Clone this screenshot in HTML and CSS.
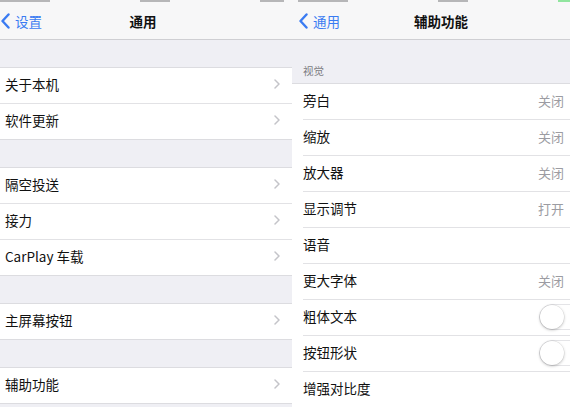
FILE: index.html
```html
<!DOCTYPE html>
<html lang="zh-CN">

<head>
    <meta charset="UTF-8">
    <meta name="viewport" content="width=device-width, initial-scale=1.0">
    <title>通用 / 辅助功能</title>

    <link rel="stylesheet" href="styles.css">
</head>

<body>

    <div class="screens">

        <!-- 通用 -->
        <section class="screen screen-left">
            <div class="status">
                <span class="status-mark mark-carrier"></span>
                <span class="status-mark mark-time"></span>
                <span class="status-mark mark-battery"></span>
            </div>
            <header class="nav">
                <a class="back">
                    <svg class="back-icon" viewBox="0 0 9 16" width="9" height="16">
                        <polyline points="7.5,1.5 1.5,8 7.5,14.5" />
                    </svg>
                    设置
                </a>
                <h1 class="nav-title">通用</h1>
            </header>

            <div class="group">
                <div class="row">
                    <div class="row-body"><span class="label">关于本机</span><svg class="chevron" viewBox="0 0 6 10" width="6" height="10"><polyline points="1,1 5,5 1,9" /></svg></div>
                </div>
                <div class="row">
                    <div class="row-body"><span class="label">软件更新</span><svg class="chevron" viewBox="0 0 6 10" width="6" height="10"><polyline points="1,1 5,5 1,9" /></svg></div>
                </div>
            </div>

            <div class="group">
                <div class="row">
                    <div class="row-body"><span class="label">隔空投送</span><svg class="chevron" viewBox="0 0 6 10" width="6" height="10"><polyline points="1,1 5,5 1,9" /></svg></div>
                </div>
                <div class="row">
                    <div class="row-body"><span class="label">接力</span><svg class="chevron" viewBox="0 0 6 10" width="6" height="10"><polyline points="1,1 5,5 1,9" /></svg></div>
                </div>
                <div class="row">
                    <div class="row-body"><span class="label">CarPlay 车载</span><svg class="chevron" viewBox="0 0 6 10" width="6" height="10"><polyline points="1,1 5,5 1,9" /></svg></div>
                </div>
            </div>

            <div class="group">
                <div class="row">
                    <div class="row-body"><span class="label">主屏幕按钮</span><svg class="chevron" viewBox="0 0 6 10" width="6" height="10"><polyline points="1,1 5,5 1,9" /></svg></div>
                </div>
            </div>

            <div class="group">
                <div class="row">
                    <div class="row-body"><span class="label">辅助功能</span><svg class="chevron" viewBox="0 0 6 10" width="6" height="10"><polyline points="1,1 5,5 1,9" /></svg></div>
                </div>
            </div>
        </section>

        <!-- 辅助功能 -->
        <section class="screen screen-right">
            <div class="status">
                <span class="status-mark mark-carrier"></span>
                <span class="status-mark mark-time"></span>
                <span class="status-mark mark-battery battery-green"></span>
            </div>
            <header class="nav">
                <a class="back">
                    <svg class="back-icon" viewBox="0 0 9 16" width="9" height="16">
                        <polyline points="7.5,1.5 1.5,8 7.5,14.5" />
                    </svg>
                    通用
                </a>
                <h1 class="nav-title">辅助功能</h1>
            </header>

            <div class="section-header">视觉</div>

            <div class="group group-flush">
                <div class="row">
                    <div class="row-body"><span class="label">旁白</span><span class="value">关闭</span><svg class="chevron" viewBox="0 0 6 10" width="6" height="10"><polyline points="1,1 5,5 1,9" /></svg></div>
                </div>
                <div class="row">
                    <div class="row-body"><span class="label">缩放</span><span class="value">关闭</span><svg class="chevron" viewBox="0 0 6 10" width="6" height="10"><polyline points="1,1 5,5 1,9" /></svg></div>
                </div>
                <div class="row">
                    <div class="row-body"><span class="label">放大器</span><span class="value">关闭</span><svg class="chevron" viewBox="0 0 6 10" width="6" height="10"><polyline points="1,1 5,5 1,9" /></svg></div>
                </div>
                <div class="row">
                    <div class="row-body"><span class="label">显示调节</span><span class="value">打开</span><svg class="chevron" viewBox="0 0 6 10" width="6" height="10"><polyline points="1,1 5,5 1,9" /></svg></div>
                </div>
                <div class="row">
                    <div class="row-body"><span class="label">语音</span><svg class="chevron" viewBox="0 0 6 10" width="6" height="10"><polyline points="1,1 5,5 1,9" /></svg></div>
                </div>
                <div class="row">
                    <div class="row-body"><span class="label">更大字体</span><span class="value">关闭</span><svg class="chevron" viewBox="0 0 6 10" width="6" height="10"><polyline points="1,1 5,5 1,9" /></svg></div>
                </div>
                <div class="row">
                    <div class="row-body"><span class="label">粗体文本</span><span class="toggle"><span class="knob"></span></span></div>
                </div>
                <div class="row">
                    <div class="row-body"><span class="label">按钮形状</span><span class="toggle"><span class="knob"></span></span></div>
                </div>
                <div class="row">
                    <div class="row-body"><span class="label">增强对比度</span><svg class="chevron" viewBox="0 0 6 10" width="6" height="10"><polyline points="1,1 5,5 1,9" /></svg></div>
                </div>
            </div>
        </section>

    </div>

</body>

</html>
```

FILE: styles.css
```css
body {
    margin: 0;
    width: 570px;
    height: 407px;
    overflow: hidden;
    background-color: #efeff4;
    font-family: "Noto Sans CJK SC", "Noto Sans", sans-serif;
    color: #111;
}

.screens {
    display: flex;
    width: 570px;
    height: 407px;
    overflow: hidden;
}

.screen {
    flex-shrink: 0;
    width: 298px;
    height: 407px;
    background-color: #efeff4;
    overflow: hidden;
}

.screen-left {
    margin-left: -6px;
}

/* status bar, only the bottom edge of its glyphs is in the crop */
.status {
    height: 5px;
    box-sizing: border-box;
    background-color: #f7f7f8;
    display: flex;
    align-items: flex-start;
    justify-content: space-between;
    padding: 0 8px 0 6px;
}

.status-mark {
    height: 2px;
    background-color: #8a8a8e;
    opacity: 0.6;
}

.mark-carrier {
    width: 50px;
}

.mark-time {
    width: 30px;
}

.mark-battery {
    width: 24px;
}

.battery-green {
    background-color: #4cd964;
}

.nav {
    height: 34px;
    box-sizing: border-box;
    display: grid;
    grid-template-columns: 1fr auto 1fr;
    align-items: center;
    background-color: #f7f7f8;
    border-bottom: 1px solid #cfcfd3;
    padding: 0 7px 3px;
    height: 35px;
}

.back {
    display: flex;
    align-items: center;
    gap: 5px;
    color: #3a7bf2;
    font-size: 13.5px;
    line-height: 16px;
}

.back-icon polyline {
    fill: none;
    stroke: #3a7bf2;
    stroke-width: 2.4;
    stroke-linecap: round;
    stroke-linejoin: round;
}

.nav-title {
    margin: 0;
    font-size: 13.5px;
    font-weight: 600;
    color: #111;
    text-align: center;
}

.section-header {
    height: 43px;
    box-sizing: border-box;
    padding: 0 0 5px 11px;
    display: flex;
    align-items: flex-end;
    font-size: 10.5px;
    color: #7c7c82;
}

.group {
    margin-top: 27px;
    background-color: #fff;
    border-top: 1px solid #dcdce0;
    border-bottom: 1px solid #dcdce0;
}

.group-flush {
    margin-top: 0;
}

.row {
    padding-left: 11px;
}

.screen-left .row {
    padding-left: 0;
}

.screen-left .row-body {
    padding-left: 11px;
}

.row-body {
    height: 36px;
    box-sizing: border-box;
    display: flex;
    align-items: center;
    padding-right: 12px;
    padding-bottom: 3px;
    border-bottom: 1px solid #e2e2e5;
}

.row:last-child .row-body {
    height: 35px;
    border-bottom: none;
}

.label {
    flex: 1;
    font-size: 13.5px;
    color: #111;
}

.value {
    font-size: 13px;
    color: #9c9ca2;
    margin-right: 8px;
}

.chevron polyline {
    fill: none;
    stroke: #c4c4c9;
    stroke-width: 1.5;
    stroke-linecap: round;
    stroke-linejoin: round;
}

.toggle {
    width: 44px;
    height: 26px;
    box-sizing: border-box;
    margin-right: -5px;
    margin-top: 1px;
    border: 1.5px solid #e4e4e7;
    border-radius: 13px;
    background-color: #fff;
    display: flex;
    align-items: center;
}

.knob {
    width: 24px;
    height: 24px;
    border-radius: 50%;
    background-color: #fff;
    box-shadow: 0 1px 3px rgba(0, 0, 0, 0.25), 0 0 0 0.5px rgba(0, 0, 0, 0.08);
}
```
